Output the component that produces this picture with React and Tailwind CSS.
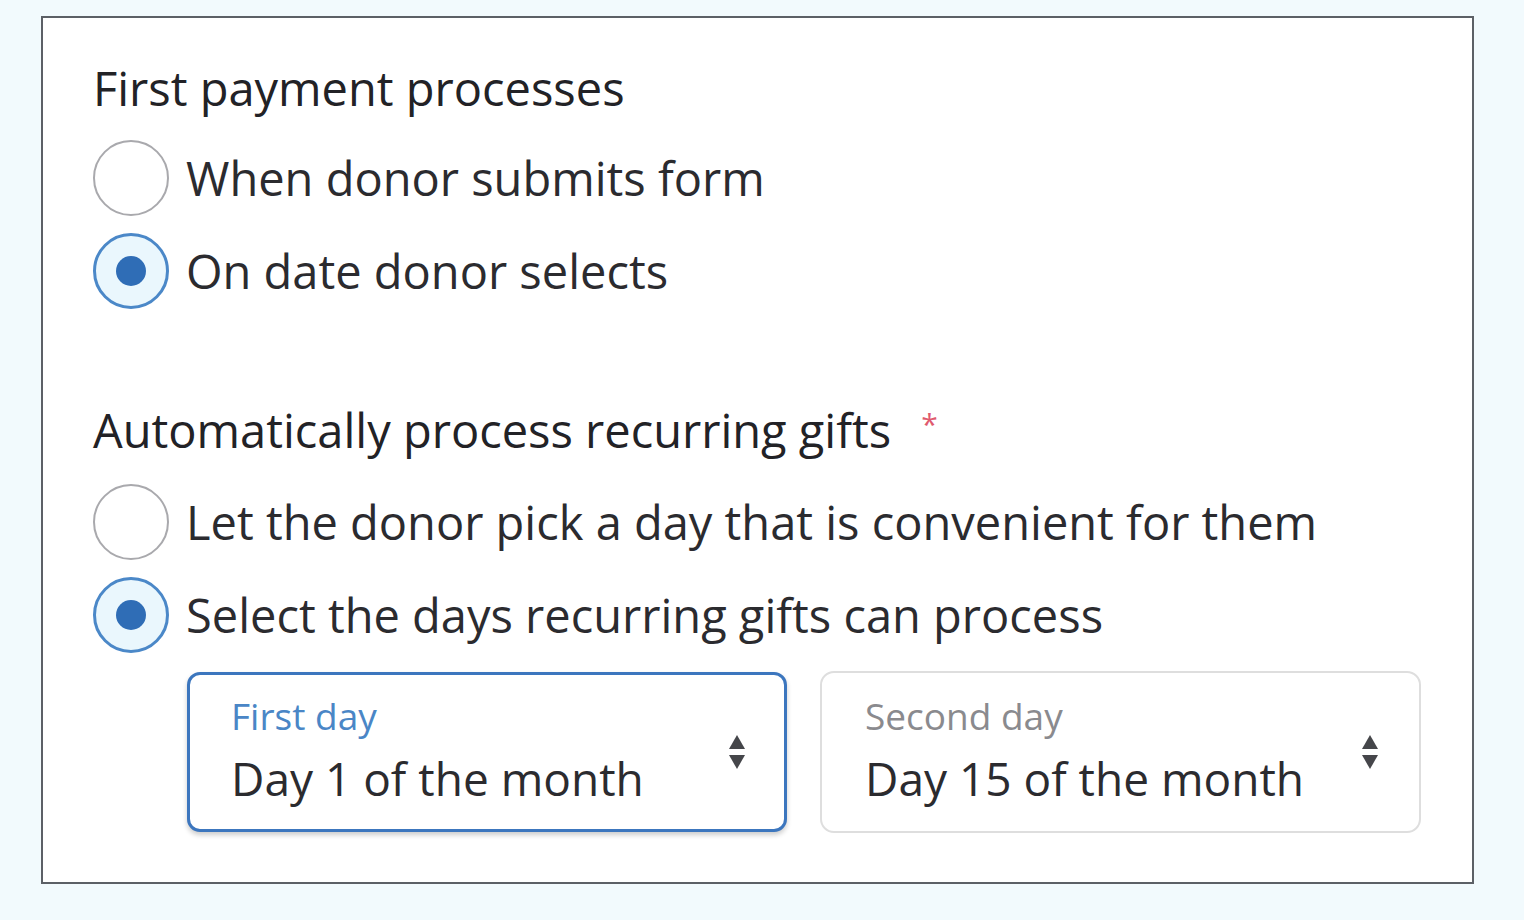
import React from "react";

function Radio({ checked, label }) {
  return (
    <div className="flex h-[93px] items-center">
      {checked ? (
        <div className="flex h-[76px] w-[76px] shrink-0 items-center justify-center rounded-full border-[3px] border-[#4b88c8] bg-[#eaf7fd]">
          <div className="h-[30px] w-[30px] rounded-full bg-[#2f6db6]" />
        </div>
      ) : (
        <div className="h-[76px] w-[76px] shrink-0 rounded-full border-2 border-[#a9a9ad] bg-white" />
      )}
      <span className="ml-[17px] text-[47px] leading-[60px] text-[#2b2b2f]">{label}</span>
    </div>
  );
}

function Arrows() {
  return (
    <svg width="18" height="36" viewBox="0 0 18 36" className="shrink-0">
      <path d="M9 1 L17 15 L1 15 Z" fill="#45464a" />
      <path d="M1 21 L17 21 L9 35 Z" fill="#45464a" />
    </svg>
  );
}

function SelectBox({ label, value, focused }) {
  return (
    <div
      className={
        focused
          ? "flex h-[160px] w-[600px] items-center justify-between rounded-[13px] border-[3px] border-[#3c76be] bg-white pl-[41px] pr-[38px] shadow-[0_3px_5px_rgba(0,0,0,0.2)]"
          : "flex h-[162px] w-[601px] items-center justify-between rounded-[14px] border-2 border-[#dedede] bg-white pl-[43px] pr-[40px]"
      }
    >
      <div className="-mt-[6px] flex flex-col">
        <span className={focused ? "text-[37px] leading-[44px] text-[#4a86c6]" : "text-[37px] leading-[44px] text-[#8a8a8e]"}>
          {label}
        </span>
        <span className="mt-[14px] text-[46px] leading-[52px] text-[#2b2b2f]">{value}</span>
      </div>
      <Arrows />
    </div>
  );
}

export default function App() {
  return (
    <div
      className="h-[920px] w-[1524px] bg-[#f2fafd] pl-[41px] pt-[16px]"
      style={{ fontFamily: '"Open Sans", "Noto Sans", sans-serif' }}
    >
      <div className="flex h-[868px] w-[1433px] flex-col border-2 border-[#5c6066] bg-white pl-[50px] pt-[40px]">
        <div className="h-[60px] text-[47px] leading-[60px] text-[#222226]">First payment processes</div>
        <div className="mt-[13px]">
          <Radio label="When donor submits form" />
          <Radio checked label="On date donor selects" />
        </div>
        <div className="mt-[83px] flex h-[60px] items-start text-[47px] leading-[60px] text-[#222226]">
          <span>Automatically process recurring gifts</span>
          <span className="ml-[30px] mt-[4px] text-[30px] leading-[40px] text-[#e05a6e]">*</span>
        </div>
        <div className="mt-[15px]">
          <Radio label="Let the donor pick a day that is convenient for them" />
          <Radio checked label="Select the days recurring gifts can process" />
        </div>
        <div className="ml-[94px] mt-[10px] flex items-center gap-[33px]">
          <SelectBox focused label="First day" value="Day 1 of the month" />
          <SelectBox label="Second day" value="Day 15 of the month" />
        </div>
      </div>
    </div>
  );
}
